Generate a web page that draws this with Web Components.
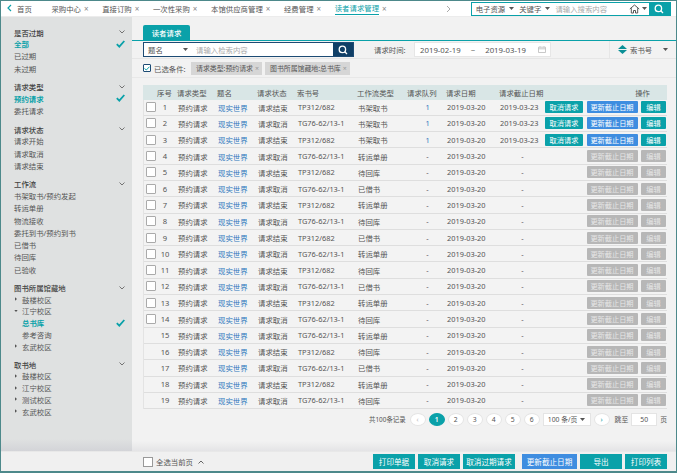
<!DOCTYPE html>
<html lang="zh">
<head>
<meta charset="utf-8">
<title>读者请求管理</title>
<style>
  html, body { margin: 0; padding: 0; }
  body { font: 7.4px "Noto Sans", "Noto Sans CJK SC", sans-serif; color: #555; background: #f2f2f2; }
</style>
</head>
<body>
<app-shell>
  <top-bar slot="top"></top-bar>
  <side-nav slot="side">
    <filter-group title="是否过期">
      <side-item active>全部</side-item>
      <side-item>已过期</side-item>
      <side-item>未过期</side-item>
    </filter-group>
    <filter-group title="请求类型">
      <side-item active>预约请求</side-item>
      <side-item>委托请求</side-item>
    </filter-group>
    <filter-group title="请求状态">
      <side-item>请求开始</side-item>
      <side-item>请求取消</side-item>
      <side-item>请求结束</side-item>
    </filter-group>
    <filter-group title="工作流">
      <side-item>书架取书/预约发起</side-item>
      <side-item>转运单册</side-item>
      <side-item>物流接收</side-item>
      <side-item>委托到书/预约到书</side-item>
      <side-item>已借书</side-item>
      <side-item>待回库</side-item>
      <side-item>已验收</side-item>
    </filter-group>
    <filter-group title="图书所属馆藏地">
      <side-item tree="closed">鼓楼校区</side-item>
      <side-item tree="open">江宁校区</side-item>
      <side-item indent active>总书库</side-item>
      <side-item indent>参考咨询</side-item>
      <side-item tree="closed">玄武校区</side-item>
    </filter-group>
    <filter-group title="取书地">
      <side-item tree="closed">鼓楼校区</side-item>
      <side-item tree="closed">江宁校区</side-item>
      <side-item tree="closed">测试校区</side-item>
      <side-item tree="closed">玄武校区</side-item>
    </filter-group>
  </side-nav>
  <search-panel slot="main"></search-panel>
  <request-table slot="main"></request-table>
  <pager-bar slot="main"></pager-bar>
  <action-bar slot="bottom"></action-bar>
</app-shell>

<script>
const sel = `<svg width="5" height="3" viewBox="0 0 5 3"><path d="M0 0h5L2.5 3z" fill="#555"/></svg>`
const glass = `<svg width="10" height="10" viewBox="0 0 10 10" fill="none" stroke="#fff" stroke-width="1.3"><circle cx="4.4" cy="4.4" r="3.2"/><path d="M6.8 6.8 9 9"/></svg>`

class AppShell extends HTMLElement {
  constructor() {
    super()
    this.attachShadow({ mode: "open" }).innerHTML = `
    <style>
      :host { display: flex; flex-direction: column; width: 677px; height: 473px; box-sizing: border-box;
        border: 1px solid #4d898b; border-bottom-width: 2px; overflow: hidden; }
      .middle { display: flex; height: 434px; }
      .main { flex: 1; min-width: 0; display: flex; flex-direction: column; background: #f2f2f2;
        background-image: linear-gradient(#f2f2f2 424px, #e4e4e6 434px); }
    </style>
    <slot name="top"></slot>
    <div class="middle">
      <slot name="side"></slot>
      <div class="main"><slot name="main"></slot></div>
    </div>
    <slot name="bottom"></slot>`
  }
}

class TopBar extends HTMLElement {
  constructor() {
    super()
    const tabs = ["采购中心", "直接订购", "一次性采购", "本馆供应商管理", "经费管理"]
    this.attachShadow({ mode: "open" }).innerHTML = `
    <style>
      :host { display: flex; align-items: center; height: 16px; background: #fff; box-sizing: border-box; border-bottom: 1px solid #ececec; flex: none; }
      .back { width: 16px; text-align: center; flex: none; }
      .tabs { display: flex; gap: 13.6px; align-items: center; height: 100%; }
      .tab { display: flex; gap: 3px; align-items: center; height: 100%; box-sizing: border-box; white-space: nowrap; }
      .tab i { font-style: normal; color: #888; font-size: 8px; line-height: 1; }
      .tab.home { margin-right: 6px; }
      .tab.on { color: #0aa1a9; }
      .tab.on span { border-bottom: 1px solid #0aa1a9; height: 11px; line-height: 11px; margin-top: 1px; }
      .next { margin-left: 59px; flex: none; display: flex; }
      .search { margin-left: 20px; width: 200px; height: 14px; box-sizing: border-box; border: 1px solid #0aa1a9; display: flex; align-items: center; flex: none; }
      .search .f { display: flex; align-items: center; gap: 4px; white-space: nowrap; }
      .search .ph { color: #aaa; width: 52px; white-space: nowrap; flex: none; }
      .search button { margin-left: auto; width: 21px; height: 100%; border: 0; padding: 0; background: #0aa1a9; display: flex; align-items: center; justify-content: center; }
    </style>
    <div class="back"><svg width="5" height="8" viewBox="0 0 5 8" fill="none" stroke="#0aa1a9" stroke-width="1.2"><path d="M4 1 1 4l3 3"/></svg></div>
    <div class="tabs">
      <div class="tab home"><span>首页</span></div>
      ${tabs.map(t => `<div class="tab"><span>${t}</span><i>×</i></div>`).join("")}
      <div class="tab on"><span>读者请求管理</span><i>×</i></div>
    </div>
    <div class="next"><svg width="5" height="8" viewBox="0 0 5 8" fill="none" stroke="#aaa" stroke-width="1"><path d="M1 1l3 3-3 3"/></svg></div>
    <div class="search">
      <div class="f" style="margin-left:4px">电子资源 ${sel}</div>
      <div class="f" style="margin-left:5px">关键字 ${sel}</div>
      <div class="ph" style="margin-left:5px">请输入搜索内容</div>
      <svg style="margin-left:22px;flex:none" width="11" height="10" viewBox="0 0 11 10" fill="none" stroke="#555" stroke-width="1"><path d="M.8 5 5.500 1l4.700 4M2.300 4.200V9h2.200V6.500h2V9h2.200V4.200"/></svg>
      <span style="margin-left:2px;display:flex">${sel}</span>
      <button aria-label="搜索">${glass}</button>
    </div>`
  }
}

class SideNav extends HTMLElement {
  constructor() {
    super()
    this.attachShadow({ mode: "open" }).innerHTML = `
    <style>
      :host { display: flex; flex-direction: column; width: 131px; flex: none; box-sizing: border-box; padding-top: 9.5px;
        background: linear-gradient(#dfe1e1 422px, #d3d4d8 434px); }
    </style>
    <slot></slot>`
  }
}

class FilterGroup extends HTMLElement {
  constructor() {
    super()
    this.attachShadow({ mode: "open" }).innerHTML = `
    <style>
      :host { display: block; padding: 0 0 6.8px 13px; }
      .title { display: flex; align-items: center; justify-content: space-between; height: 11px; padding-right: 7px; color: #444; font-weight: 500; }
    </style>
    <div class="title"><span></span>
      <svg width="6" height="4" viewBox="0 0 6 4" fill="none" stroke="#666" stroke-width=".9"><path d="M.5.5 3 3 5.500.5"/></svg>
    </div>
    <slot></slot>`
    this.shadowRoot.querySelector("span").textContent = this.getAttribute("title")
    this.removeAttribute("title")
  }
}

class SideItem extends HTMLElement {
  constructor() {
    super()
    const tree = this.getAttribute("tree")
    const arrow = tree === "open"
      ? `<svg width="4" height="4" viewBox="0 0 4 4"><path d="M.3 1h3.400L2 3z" fill="#555"/></svg>`
      : tree ? `<svg width="4" height="4" viewBox="0 0 4 4"><path d="M1 .3v3.400L3 2z" fill="#555"/></svg>` : ""
    this.attachShadow({ mode: "open" }).innerHTML = `
    <style>
      :host { display: flex; align-items: center; height: 12.3px; padding-right: 7px; white-space: nowrap; }
      :host([tree]), :host([indent]) { height: 11.8px; }
      :host([indent]) { padding-left: 8px; }
      :host([active]) { color: #0aa1a9; font-weight: 700; }
      .a { width: 8px; display: flex; flex: none; }
      svg.c { margin-left: auto; }
    </style>
    ${tree ? `<span class="a">${arrow}</span>` : ""}<slot></slot>
    ${this.hasAttribute("active") ? `<svg class="c" width="9" height="8" viewBox="0 0 9 8" fill="none" stroke="#0aa1a9" stroke-width="1.800"><path d="M.8 4.200 3.300 6.700 8.300 1"/></svg>` : ""}`
  }
}

class SearchPanel extends HTMLElement {
  constructor() {
    super()
    this.attachShadow({ mode: "open" }).innerHTML = `
    <style>
      :host { display: block; flex: none; }
      .tabline { height: 24px; box-sizing: border-box; padding: 8px 0 0 11px; border-bottom: 1px solid #0aa1a9; }
      .tabline span { display: flex; align-items: center; justify-content: center; width: 47px; height: 15px; background: #0aa1a9; color: #fff; border-radius: 2px 2px 0 0; font-weight: 500; }
      .row1 { display: flex; align-items: center; height: 18px; border-bottom: 1px solid #e6e6e6; box-sizing: border-box; padding-left: 11px; }
      .input { display: flex; align-items: center; width: 211px; height: 15px; background: #fff; box-sizing: border-box; border: 1px solid #1d4b74; flex: none; }
      .input .f { width: 49px; padding-left: 4px; box-sizing: border-box; display: flex; justify-content: space-between; padding-right: 5px; align-items: center; flex: none; }
      .input .ph { color: #aaa; margin-left: 3px; }
      .input button { margin-left: auto; width: 20px; height: 100%; border: 0; padding: 0; background: #103f66; display: flex; align-items: center; justify-content: center; }
      .lbl { margin-left: 20px; width: 40px; flex: none; }
      .date { display: flex; align-items: center; width: 137px; height: 15px; background: #fff; border: 1px solid #e6e6e6; box-sizing: border-box; padding-left: 5px; flex: none; font-size: 7.8px; }
      .date svg { margin-left: auto; margin-right: 4px; }
      .date b { font-weight: 400; margin: 0 10px; }
      .sort { margin-left: 58px; height: 100%; flex: 1; border-left: 1px solid #e6e6e6; display: flex; align-items: center; padding-left: 8px; gap: 3px; }
      .sort .k { margin-left: auto; margin-right: 8px; display: flex; }
      .row2 { display: flex; align-items: center; height: 19px; border-bottom: 1px solid #e8e8e8; box-sizing: border-box; padding-left: 11px; background: #f2f2f2; }
      .cb { width: 8px; height: 8px; border: 1px solid #1d4b74; box-sizing: border-box; border-radius: 1px; background: #fff; display: flex; align-items: center; justify-content: center; margin-right: 3px; }
      .chip { display: flex; align-items: center; gap: 2px; height: 13px; padding: 0 3px 0 5px; background: #d6d6d6; margin-right: 3px; white-space: nowrap; font-size: 6.9px; }
      .chip i { font-style: normal; color: #999; font-size: 7px; }
    </style>
    <div class="tabline"><span>读者请求</span></div>
    <div class="row1">
      <div class="input">
        <div class="f">题名 ${sel}</div>
        <div class="ph">请输入检索内容</div>
        <button aria-label="检索">${glass}</button>
      </div>
      <div class="lbl">请求时间:</div>
      <div class="date">2019-02-19 <b>~</b> 2019-03-19
        <svg width="8" height="7" viewBox="0 0 8 7" fill="none" stroke="#bbb" stroke-width=".8"><path d="M.5 1.200h7v5.300h-7zM.5 2.800h7M2 .3v1M6 .3v1"/></svg>
      </div>
      <div class="sort">
        <svg width="9" height="9" viewBox="0 0 9 9" fill="#0a8f96"><path d="M4.500 0 9 4H0zM0 5h9L4.500 9z"/></svg>
        <span>索书号</span>
        <span class="k">${sel}</span>
      </div>
    </div>
    <div class="row2">
      <div class="cb"><svg width="6" height="5" viewBox="0 0 6 5" fill="none" stroke="#0aa1a9" stroke-width="1"><path d="M.5 2.500 2.300 4 5.500.7"/></svg></div>
      <span style="width:37px;flex:none">已选条件:</span>
      <div class="chip">请求类型:预约请求 <i>×</i></div>
      <div class="chip">图书所属馆藏地:总书库 <i>×</i></div>
    </div>`
  }
}

const cols = "14px 20px 40px 40px 40px 60px 50px 39px 53px 45px 123px"

class RequestRow extends HTMLElement {
  set data(d) {
    const btn = d.n <= 3
      ? `<button class="teal" style="width:38px">取消请求</button><button class="blue">更新截止日期</button><button class="teal e">编辑</button>`
      : `<button class="off">更新截止日期</button><button class="off e">编辑</button>`
    this.shadowRoot.querySelector(".r").innerHTML = `
      <div class="c">${d.n <= 14 ? `<span class="box"></span>` : ""}</div>
      <div class="n">${d.n}</div>
      <div>预约请求</div>
      <div class="l">现实世界</div>
      <div>${d.status}</div>
      <div>${d.call}</div>
      <div>${d.flow}</div>
      <div class="q ${d.n <= 3 ? "l" : ""}">${d.n <= 3 ? 1 : "-"}</div>
      <div>2019-03-20</div>
      <div class="${d.n <= 3 ? "" : "q"}">${d.n <= 3 ? "2019-03-23" : "-"}</div>
      <div class="ops">${btn}</div>`
  }
  constructor() {
    super()
    this.attachShadow({ mode: "open" }).innerHTML = `
    <style>
      :host { display: block; height: 16.3px; box-sizing: border-box; border-bottom: 1px solid #dedede; }
      .r { display: grid; grid-template-columns: ${cols}; align-items: center; height: 100%; white-space: nowrap; font-size: 7.4px; }
      .c { display: flex; padding-left: 2px; }
      .box { width: 10px; height: 10px; box-sizing: border-box; background: #fff; border: 1px solid #aaa; border-radius: 1px; }
      .n { text-align: center; padding-right: 6px; font-size: 7.6px; }
      .l { color: #2f78bd; }
      .q { text-align: center; }
      .ops { display: flex; justify-content: flex-end; gap: 3.5px; padding-right: 2px; }
      button { height: 12px; border: 0; padding: 0; color: #fff; font: inherit; font-size: 7.200px; width: 51px; border-radius: 1px; }
      .e { width: 25px; }
      .teal { background: #0aa1a9; }
      .blue { background: #3e8de0; }
      .off { background: #b7b7b7; color: #e6e6e6; }
    </style>
    <div class="r"></div>`
  }
}

class RequestTable extends HTMLElement {
  constructor() {
    super()
    this.attachShadow({ mode: "open" }).innerHTML = `
    <style>
      :host { display: block; margin: 6.5px 9px 0 11px; flex: none; }
      .head { display: grid; grid-template-columns: ${cols}; align-items: center; height: 15px; background: #d9e6e6; white-space: nowrap; color: #555; }
      .rows { background: #f3f3f3; border-left: 1px solid #e3e3e3; }
      .t { text-align: right; padding-right: 17px; }
    </style>
    <div class="head">
      <div></div><div>序号</div><div>请求类型</div><div>题名</div><div>请求状态</div><div>索书号</div><div>工作流类型</div><div>请求队列</div><div>请求日期</div><div>请求截止日期</div><div class="t">操作</div>
    </div>
    <div class="rows"></div>`
    const flows = ["书架取书", "书架取书", "书架取书", "转运单册", "待回库", "已借书", "转运单册", "待回库", "已借书", "转运单册", "待回库", "已借书", "转运单册", "待回库", "转运单册", "待回库", "已借书", "转运单册", "待回库"]
    const rows = this.shadowRoot.querySelector(".rows")
    flows.forEach((flow, i) => {
      const n = i + 1
      // 第15行状态和前一行一样，后面才又开始交替
      const tp = n < 15 ? n % 2 === 1 : n % 2 === 0
      const row = document.createElement("request-row")
      row.data = { n, flow, status: tp ? "请求结束" : "请求取消", call: tp ? "TP312/682" : "TG76-62/13-1" }
      rows.append(row)
    })
  }
}

class PagerBar extends HTMLElement {
  constructor() {
    super()
    this.attachShadow({ mode: "open" }).innerHTML = `
    <style>
      :host { display: flex; align-items: center; justify-content: flex-end; height: 13px; margin-top: 3.5px; padding-right: 9px; white-space: nowrap; flex: none; font-size: 6.8px; }
      .p { width: 16px; height: 13px; box-sizing: border-box; border-radius: 50%; background: #fff; border: 1px solid #e4e4e4; display: flex; align-items: center; justify-content: center; margin-left: 3px; flex: none; }
      .p.on { background: #0aa1a9; color: #fff; border-color: #0aa1a9; font-weight: 600; }
      .size { width: 48px; height: 13px; box-sizing: border-box; background: #fff; border: 1px solid #e4e4e4; display: flex; align-items: center; justify-content: center; gap: 3px; margin-left: 3px; flex: none; }
      .jump { width: 26px; height: 13px; box-sizing: border-box; background: #fff; border: 1px solid #e4e4e4; display: flex; align-items: center; justify-content: center; margin: 0 3px; flex: none; }
      .rec { font-size: 6.4px; margin-right: 1px; }
    </style>
    <span class="rec">共100条记录</span>
    <div class="p" style="color:#bbb">‹</div>
    <div class="p on">1</div><div class="p">2</div><div class="p">3</div><div class="p">4</div><div class="p">5</div><div class="p">6</div>
    <div class="size">100 条/页 ${sel}</div>
    <div class="p" style="color:#0aa1a9;margin-left:3px;margin-right:5px">›</div>
    <span>跳至</span><div class="jump">50</div><span>页</span>`
  }
}

class ActionBar extends HTMLElement {
  constructor() {
    super()
    const b = [["打印单据", 42], ["取消请求", 42], ["取消过期请求", 52], ["更新截止日期", 55, "#3e8de0;margin-left:4px"], ["导出", 42], ["打印列表", 42]]
    this.attachShadow({ mode: "open" }).innerHTML = `
    <style>
      :host { display: flex; align-items: center; height: 20px; flex: none; background: #f0f0f0; padding: 0 9px 0 142px; box-sizing: border-box; border-top: 1px solid #e8e8e8; }
      .box { width: 10px; height: 10px; box-sizing: border-box; background: #fff; border: 1px solid #999; margin-right: 3px; }
      .btns { margin-left: auto; display: flex; gap: 3px; }
      button { height: 15px; border: 0; padding: 0; background: #0aa1a9; color: #fff; font: inherit; font-size: 7.600px; }
    </style>
    <div class="box"></div><span>全选当前页</span>
    <svg style="margin-left:5px" width="6" height="4" viewBox="0 0 6 4" fill="none" stroke="#555" stroke-width=".9"><path d="M.5 3.500 3 1l2.500 2.500"/></svg>
    <div class="btns">${b.map(x => `<button style="width:${x[1]}px${x[2] ? ";background:" + x[2] : ""}">${x[0]}</button>`).join("")}</div>`
  }
}

customElements.define("app-shell", AppShell)
customElements.define("top-bar", TopBar)
customElements.define("side-nav", SideNav)
customElements.define("filter-group", FilterGroup)
customElements.define("side-item", SideItem)
customElements.define("search-panel", SearchPanel)
customElements.define("request-row", RequestRow)
customElements.define("request-table", RequestTable)
customElements.define("pager-bar", PagerBar)
customElements.define("action-bar", ActionBar)
</script>
</body>
</html>
